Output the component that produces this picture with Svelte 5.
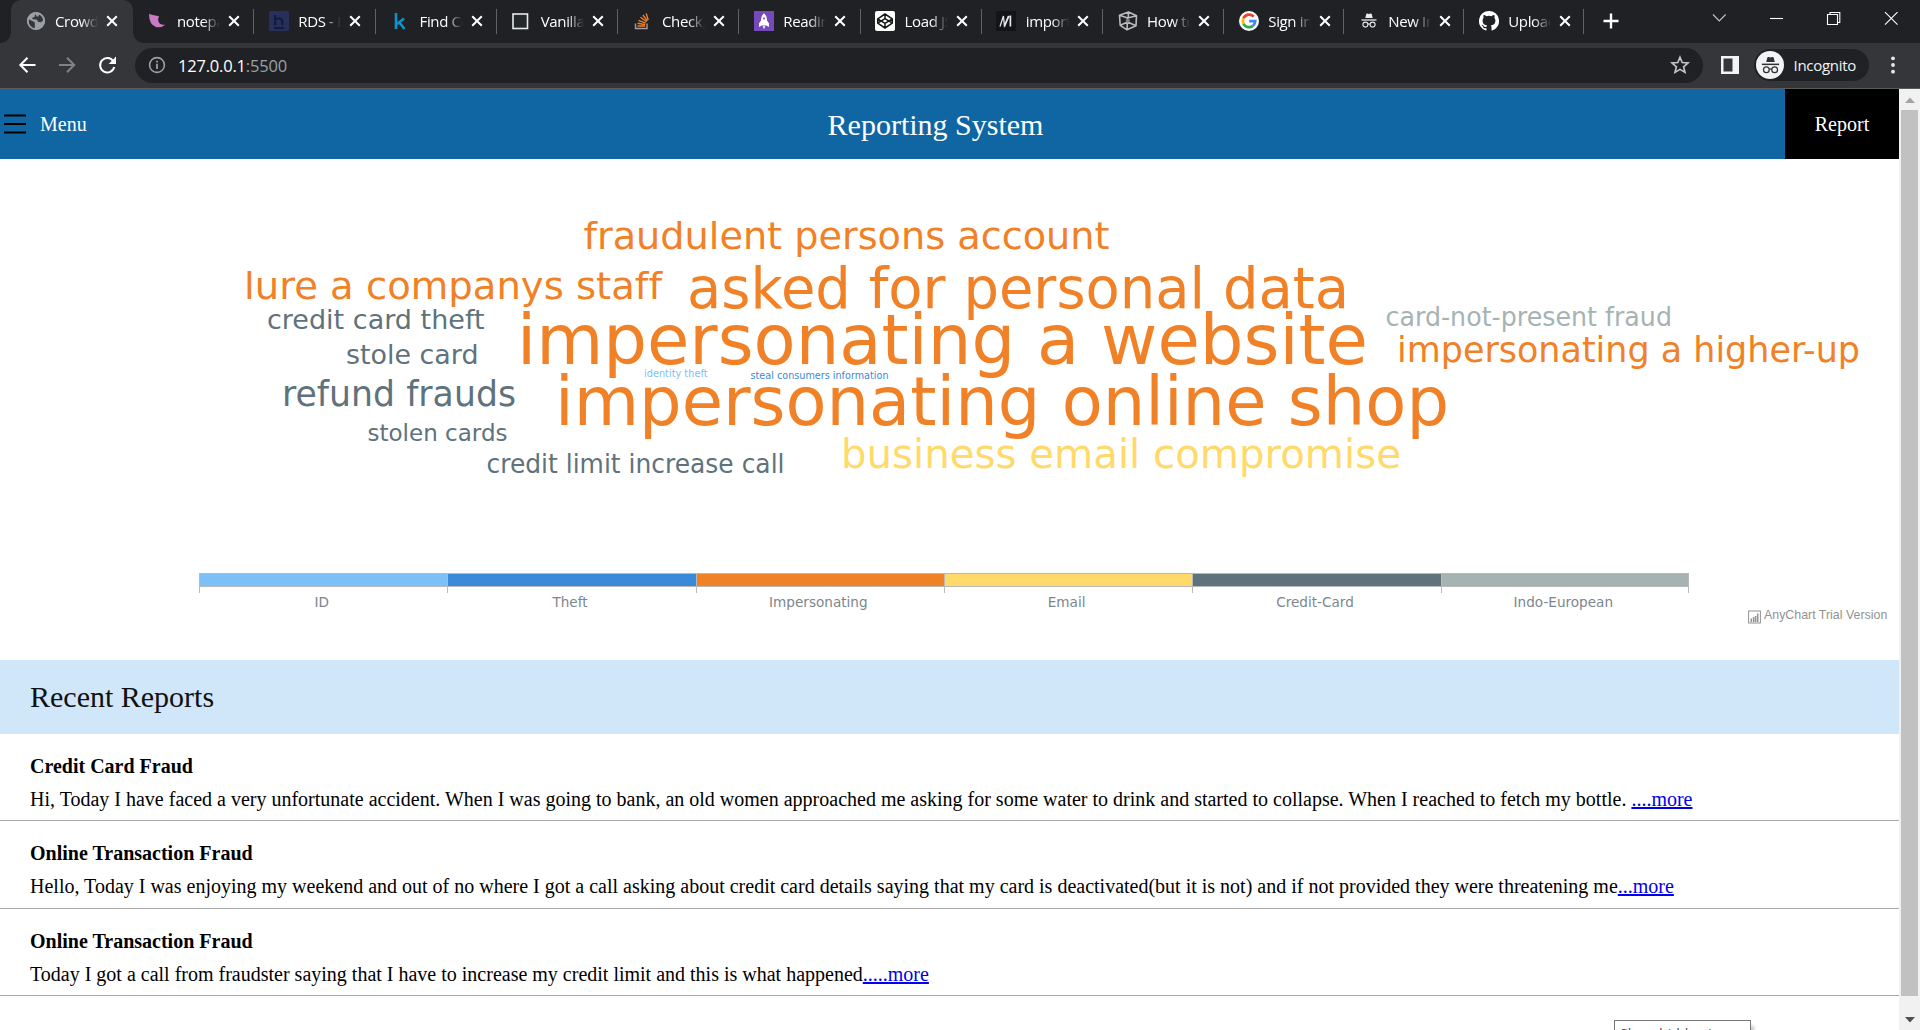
<script>
  const tabs = [
    { icon: 'globe', title: 'Crowd So', active: true },
    { icon: 'petal', title: 'notepad' },
    { icon: 'hashnode', title: 'RDS - D' },
    { icon: 'k', title: 'Find Co' },
    { icon: 'square', title: 'Vanilla J' },
    { icon: 'stack', title: 'Check, if' },
    { icon: 'rocket', title: 'Reading' },
    { icon: 'codepen', title: 'Load JS' },
    { icon: 'm', title: 'import c' },
    { icon: 'cube', title: 'How to' },
    { icon: 'google', title: 'Sign in' },
    { icon: 'spy', title: 'New Inc' },
    { icon: 'github', title: 'Upload' },
  ];

  const words = [
    { t: 'fraudulent persons account', x: 583.5, y: 248.5, w: 526, s: 38, c: '#f18126' },
    { t: 'lure a companys staff', x: 244, y: 298.5, w: 418, s: 38, c: '#f18126' },
    { t: 'asked for personal data', x: 687, y: 308, w: 662, s: 57.5, c: '#f18126' },
    { t: 'impersonating a website', x: 517, y: 364, w: 851, s: 69, c: '#f18126' },
    { t: 'impersonating online shop', x: 555, y: 425, w: 894, s: 67.5, c: '#f18126' },
    { t: 'credit card theft', x: 267, y: 329, w: 217.5, s: 27, c: '#60727b' },
    { t: 'stole card', x: 346, y: 364, w: 132.5, s: 27, c: '#60727b' },
    { t: 'refund frauds', x: 282, y: 406, w: 234, s: 35, c: '#60727b' },
    { t: 'stolen cards', x: 367.5, y: 441, w: 140, s: 23.5, c: '#60727b' },
    { t: 'credit limit increase call', x: 486.5, y: 473, w: 298, s: 26, c: '#60727b' },
    { t: 'business email compromise', x: 841, y: 467.5, w: 560, s: 40, c: '#ffda6a' },
    { t: 'card-not-present fraud', x: 1385.5, y: 326, w: 286.5, s: 26, c: '#a6b3b3' },
    { t: 'impersonating a higher-up', x: 1397, y: 362, w: 463, s: 35, c: '#f18126' },
    { t: 'identity theft', x: 644, y: 377, w: 63.5, s: 10, c: '#7cc0f7' },
    { t: 'steal consumers information', x: 750.5, y: 379, w: 138, s: 10, c: '#3b8ad9' },
  ];

  const categories = [
    { name: 'ID', kind: 'id' },
    { name: 'Theft', kind: 'theft' },
    { name: 'Impersonating', kind: 'imp' },
    { name: 'Email', kind: 'email' },
    { name: 'Credit-Card', kind: 'card' },
    { name: 'Indo-European', kind: 'indo' },
  ];

  const reports = [
    {
      title: 'Credit Card Fraud',
      text: 'Hi, Today I have faced a very unfortunate accident. When I was going to bank, an old women approached me asking for some water to drink and started to collapse. When I reached to fetch my bottle. ',
      more: '....more',
    },
    {
      title: 'Online Transaction Fraud',
      text: 'Hello, Today I was enjoying my weekend and out of no where I got a call asking about credit card details saying that my card is deactivated(but it is not) and if not provided they were threatening me',
      more: '...more',
    },
    {
      title: 'Online Transaction Fraud',
      text: 'Today I got a call from fraudster saying that I have to increase my credit limit and this is what happened',
      more: '.....more',
    },
  ];
</script>

{#snippet spy()}
  <path d="M6.3 7 7.2 3.2Q7.5 2.3 8.4 2.6L10 3.1 11.6 2.6Q12.5 2.3 12.8 3.2L13.7 7Z" fill="currentColor" />
  <path d="M2.5 9H17.5" stroke="currentColor" stroke-width="1.3" />
  <g fill="none" stroke="currentColor" stroke-width="1.1">
    <circle cx="6.4" cy="13.6" r="2.5" /><circle cx="13.6" cy="13.6" r="2.5" />
    <path d="M9 13.2Q10 12.5 11 13.2" />
  </g>
{/snippet}

{#snippet favicon(kind)}
  <svg class="fav" viewBox="0 0 20 20" width="20" height="20">
    {#if kind === 'globe'}
      <circle cx="10" cy="10" r="9" fill="#9aa0a6" />
      <path d="M2.7 8.2 7.2 10.5Q9 10.5 8.8 12.5L8.8 17.2Q4 16.8 2.8 12ZM10 3.2Q8 4.5 8.6 6L6.3 6.7 6.6 8.3 10.5 8.4Q12 9 11.6 10.8L15 11.2 17 9.6Q17 5 13 3.5L12.4 5.5 10.5 5.6Z" fill="#35363a" />
      <circle cx="10" cy="10" r="8.2" fill="none" stroke="#9aa0a6" stroke-width="1.6" />
    {:else if kind === 'petal'}
      <path d="M1 3Q6 4.5 11 5.2Q9 10 12 12.8Q14.5 14.2 17.5 13.4Q13 17.4 8 16Q1 13.5 1 3Z" fill="#c87bc4" />
    {:else if kind === 'hashnode'}
      <rect width="20" height="20" rx="1.5" fill="#27305a" />
      <path d="M6.2 4V14.5M6.2 9Q7.5 7.5 10 7.5 13.3 7.5 13.3 10.5V14.5M5 17H15" fill="none" stroke="#121b3c" stroke-width="2" />
    {:else if kind === 'k'}
      <path d="M6 2V18M14 7.5 7 13M9.5 11.5 14.5 18" fill="none" stroke="#0a93cd" stroke-width="2.6" />
    {:else if kind === 'square'}
      <rect x="2" y="3" width="14.5" height="14.5" fill="#26292b" stroke="#e8eaed" stroke-width="1.6" />
    {:else if kind === 'stack'}
      <path d="M2.5 12.5V17.5H14V12.5" fill="none" stroke="#9aa0a6" stroke-width="1.4" />
      <path d="M4.5 15H12M4.6 12.2 12.2 13.6M5.5 9.3 12.7 12.2M7.5 6.3 13.6 10.8M10 4 14.3 9.8M13.2 2.4 15.2 9" stroke="#f48024" stroke-width="1.4" />
    {:else if kind === 'rocket'}
      <rect width="20" height="20" fill="#764abc" />
      <path d="M10 2.2Q13.4 5 13 9.5L15 12.5V16L12.4 14.6H7.6L5 16V12.5L7 9.5Q6.6 5 10 2.2ZM8.6 15.2H11.4L10 18Z" fill="#fff" />
      <circle cx="10" cy="7.6" r="1" fill="#764abc" />
    {:else if kind === 'codepen'}
      <rect width="20" height="20" rx="2" fill="#fff" />
      <path d="M10 3 17.3 7.8V12.2L10 17 2.7 12.2V7.8ZM10 3V7.8M10 12.2V17M2.7 7.8 10 12.4 17.3 7.8M2.7 12.2 10 7.6 17.3 12.2" fill="none" stroke="#17181a" stroke-width="1.5" stroke-linejoin="round" />
    {:else if kind === 'm'}
      <rect width="20" height="20" fill="#131417" />
      <path d="M4 15.5 7.4 5 8.4 14.5 12.6 5" fill="none" stroke="#e4e4e4" stroke-width="1.3" />
      <path d="M8.4 15.5 12.8 5M14.4 4.5V15.5" fill="none" stroke="#e4e4e4" stroke-width="1.7" />
    {:else if kind === 'cube'}
      <path d="M1.5 4.3 10.5 1 18.5 4.8 18 14.8 9 18.8 2.2 14.3ZM1.5 4.3 9.6 7 18.5 4.8M9.6 7 9 18.8M2.2 14.3 9.6 11 18 14.8M10.5 1 10.2 7" fill="none" stroke="#b9bbbd" stroke-width="1.6" stroke-linejoin="round" />
      <circle cx="9.8" cy="9.8" r="2" fill="#808285" />
    {:else if kind === 'google'}
      <circle cx="10" cy="10" r="10" fill="#fff" />
      <g fill="none" stroke-width="2.8">
        <path d="M14.7 5.6A6.2 6.2 0 0 0 4.5 7.2" stroke="#ea4335" />
        <path d="M4.5 7.2A6.2 6.2 0 0 0 4.5 12.8" stroke="#fbbc05" />
        <path d="M4.5 12.8A6.2 6.2 0 0 0 13.9 14.8" stroke="#34a853" />
        <path d="M13.9 14.8A6.2 6.2 0 0 0 16.2 10.2H10.2" stroke="#4285f4" />
      </g>
    {:else if kind === 'spy'}
      <g class="pale">{@render spy()}</g>
    {:else}
      <path d="M10 0A10 10 0 0 0 6.8 19.5C7.3 19.6 7.5 19.3 7.5 19V17.2C4.7 17.8 4.1 15.9 4.1 15.9 3.7 14.8 3 14.4 3 14.4 2.1 13.8 3.1 13.8 3.1 13.8 4.1 13.9 4.6 14.9 4.6 14.9 5.5 16.4 7 16 7.5 15.7 7.6 15.1 7.9 14.7 8.2 14.4 6 14.1 3.6 13.3 3.6 9.5 3.6 8.4 4 7.5 4.6 6.8 4.5 6.6 4.2 5.5 4.7 4.1 4.7 4.1 5.6 3.9 7.5 5.2A9.6 9.6 0 0 1 12.5 5.2C14.4 3.9 15.3 4.1 15.3 4.1 15.8 5.5 15.5 6.6 15.4 6.8 16 7.5 16.4 8.4 16.4 9.5 16.4 13.3 14 14.1 11.8 14.4 12.2 14.7 12.5 15.3 12.5 16.2V19C12.5 19.3 12.7 19.6 13.2 19.5A10 10 0 0 0 10 0Z" fill="#fff" />
    {/if}
  </svg>
{/snippet}

<div class="window">
  <div class="tabstrip">
    {#each tabs as tab}
      <div class="tab" class:active={tab.active}>
        {@render favicon(tab.icon)}
        <span class="tab-title">{tab.title}</span>
        <svg class="close" viewBox="0 0 12 12" width="12" height="12"><path d="M1.2 1.2 10.8 10.8M10.8 1.2 1.2 10.8" stroke="#fff" stroke-width="2" /></svg>
      </div>
    {/each}
    <svg class="plus" viewBox="0 0 16 16" width="16" height="16"><path d="M8 .5V15.5M.5 8H15.5" stroke="#fff" stroke-width="2.4" /></svg>
    <svg class="controls" viewBox="0 0 190 20" width="190" height="20" fill="none" stroke="#fff" stroke-width="1.1">
      <path d="M3 6.5 9.3 13 15.6 6.5" stroke="#c4c6c9" />
      <path d="M60 10.5H73" />
      <path d="M117.5 6.5H127.5V16.5H117.5ZM120 6.5V4.5H129.8V14.5H127.5" />
      <path d="M175 4.2 187.5 16.7M187.5 4.2 175 16.7" />
    </svg>
  </div>

  <div class="toolbar">
    <svg class="nav" viewBox="0 0 120 24" width="120" height="24" fill="none" stroke="#fff" stroke-width="2">
      <path d="M17.5 12H2.5M9.5 4.8 2.3 12 9.5 19.2" />
      <path d="M41 12H56M49 4.8 56.2 12 49 19.2" stroke="#808285" />
      <path d="M95.3 8.2A7.2 7.2 0 1 0 96.3 14" />
      <path d="M98 3.6V10.9H90.7Z" fill="#fff" stroke="none" />
    </svg>
    <div class="address">
      <svg viewBox="0 0 18 18" width="18" height="18" fill="none" stroke="#9aa0a6" stroke-width="1.6"><circle cx="9" cy="9" r="7.4" /><path d="M9 7.8V13M9 4.8V6.5" stroke-width="1.8" /></svg>
      <span class="url">127.0.0.1<span class="port">:5500</span></span>
      <svg class="star" viewBox="0 0 20 20" width="20" height="20"><path d="M10 2.2 12.2 7.6 18 8 13.6 11.8 15 17.4 10 14.4 5 17.4 6.4 11.8 2 8 7.8 7.6Z" fill="none" stroke="#c6c8ca" stroke-width="1.6" /></svg>
    </div>
    <svg class="panel" viewBox="0 0 18 18" width="18" height="18"><path d="M0 0H18V18H0ZM2.5 2.5V15.5H11.5V2.5Z" fill="#f1f3f4" fill-rule="evenodd" /></svg>
    <div class="incognito">
      <span class="avatar"><svg viewBox="0 0 20 20" width="23" height="23">{@render spy()}</svg></span>
      <span>Incognito</span>
    </div>
    <svg class="dots" viewBox="0 0 4 18" width="4" height="18" fill="#e8eaed"><circle cx="2" cy="2.3" r="1.9" /><circle cx="2" cy="9" r="1.9" /><circle cx="2" cy="15.7" r="1.9" /></svg>
  </div>

  <div class="viewport">
    <main>
      <header>
        <div class="menu">
          <svg viewBox="0 0 22 20" width="22" height="20"><path d="M0 1.5H22M0 10H22M0 18.5H22" stroke="#000" stroke-width="2" /></svg>
          <span>Menu</span>
        </div>
        <h1>Reporting System</h1>
        <div class="report-btn">Report</div>
      </header>

      <section class="chart">
        <svg class="cloud" viewBox="0 159 1899 414" width="1899" height="414">
          {#each words as w}
            <text x={w.x} y={w.y} font-size={w.s} fill={w.c} textLength={w.w} lengthAdjust="spacingAndGlyphs">{w.t}</text>
          {/each}
        </svg>
        <div class="scale">
          {#each categories as c}
            <div class="range">
              <div class="swatch {c.kind}"></div>
              <span>{c.name}</span>
            </div>
          {/each}
        </div>
        <div class="credit">
          <svg viewBox="0 0 13 14" width="13" height="14"><rect x=".6" y="1" width="11.8" height="12" fill="none" stroke="#929292" /><path d="M3.3 8.5V12M5.6 7V12M7.6 6V12M9.7 3.5V12" stroke="#929292" stroke-width="1.5" /></svg>
          <span>AnyChart Trial Version</span>
        </div>
      </section>

      <h2>Recent Reports</h2>
      {#each reports as r}
        <article>
          <h3>{r.title}</h3>
          <p>{r.text}<a href="#more">{r.more}</a></p>
        </article>
      {/each}
    </main>
    <div class="scrollbar">
      <svg viewBox="0 0 10 6" width="10" height="6"><path d="M0 6 5 .5 10 6Z" fill="#a3a3a3" /></svg>
      <div class="thumb"></div>
      <svg viewBox="0 0 10 6" width="10" height="6"><path d="M0 0 5 5.5 10 0Z" fill="#505050" /></svg>
    </div>
  </div>
  <div class="tooltip">Show hidden icons</div>
</div>

<style>
  :global(body) { margin: 0; background: #fff; overflow: hidden; }
  svg { display: block; flex: none; }
  .window {
    position: relative;
    width: 1920px;
    height: 1030px;
    overflow: hidden;
    display: flex;
    flex-direction: column;
    font-family: 'Liberation Serif', serif;
  }

  .tabstrip {
    height: 43px;
    flex: none;
    display: flex;
    background: #202124;
    padding-left: 11px;
    box-sizing: border-box;
    font: 15px 'Open Sans', 'Noto Sans', sans-serif;
    color: #fff;
  }
  .tab {
    position: relative;
    width: 121.25px;
    flex: none;
    display: flex;
    align-items: center;
    box-sizing: border-box;
    padding: 0 0 1px 14.5px;
  }
  .tab:nth-child(n + 11) { width: 120px; }
  .tab:not(.active)::after {
    content: '';
    position: absolute;
    right: 0;
    top: 9px;
    width: 1px;
    height: 25px;
    background: #5f6368;
  }
  .tab.active { width: 122px; background: #35363a; border-radius: 10px 10px 0 0; }
  .tab.active::after {
    content: '';
    position: absolute;
    left: 100%;
    bottom: 0;
    width: 10px;
    height: 10px;
    background: radial-gradient(circle at 10px 0, transparent 9.5px, #35363a 10px);
  }
  .tab.active::before {
    content: '';
    position: absolute;
    right: 100%;
    bottom: 0;
    width: 10px;
    height: 10px;
    background: radial-gradient(circle at 0 0, transparent 9.5px, #35363a 10px);
  }
  .tab-title {
    width: 43px;
    margin-left: 9.5px;
    overflow: hidden;
    white-space: nowrap;
    letter-spacing: -0.35px;
    line-height: 24px;
    mask-image: linear-gradient(90deg, #000 60%, transparent 100%);
  }
  .close { margin-left: 8px; }
  .plus { margin: 13px 0 0 19px; }
  .controls { margin: 8px 0 0 91px; }
  .pale { color: #e8eaed; }

  .toolbar {
    height: 46px;
    flex: none;
    box-sizing: border-box;
    border-bottom: 1px solid #5a5b5e;
    background: #35363a;
    display: flex;
    align-items: center;
    padding-bottom: 1px;
  }
  .nav { margin-left: 18px; }
  .address {
    width: 1568px;
    height: 35px;
    margin-left: -3px;
    box-sizing: border-box;
    padding: 0 13px;
    border-radius: 18px;
    background: #202124;
    display: flex;
    align-items: center;
    font: 16.5px 'Open Sans', 'Noto Sans', sans-serif;
    color: #fff;
    letter-spacing: -0.2px;
  }
  .url { margin-left: 12px; }
  .port { color: #9aa0a6; }
  .star { margin-left: auto; }
  .panel { margin-left: 18px; }
  .incognito {
    margin-left: 15px;
    width: 115px;
    height: 32px;
    box-sizing: border-box;
    padding-left: 2px;
    border-radius: 16px;
    background: #202124;
    display: flex;
    align-items: center;
    gap: 9.5px;
    font: 15px 'Open Sans', 'Noto Sans', sans-serif;
    letter-spacing: -0.3px;
    color: #f1f3f4;
  }
  .avatar {
    width: 28px;
    height: 28px;
    flex: none;
    border-radius: 50%;
    background: #f1f3f4;
    color: #303134;
    display: grid;
    place-items: center;
  }
  .dots { margin-left: 21.5px; }

  .viewport { flex: 1; display: flex; min-height: 0; }
  main { width: 1899px; flex: none; overflow: hidden; }
  header {
    height: 70px;
    background: #1066a3;
    color: #fff;
    display: grid;
    grid-template-columns: 114px 1fr 114px;
    align-items: center;
    font-size: 20px;
  }
  .menu { display: flex; align-items: center; gap: 14px; padding-left: 4px; }
  .menu span { padding-top: 1px; }
  h1 { margin: 0; text-align: center; font-size: 30px; font-weight: 400; line-height: 34px; padding: 1px 28px 0 0; }
  .report-btn { height: 100%; box-sizing: border-box; padding-top: 1px; background: #000; display: grid; place-items: center; }

  .chart { position: relative; height: 501px; }
  .cloud { font-family: Verdana, 'DejaVu Sans', sans-serif; font-variant-ligatures: none; }
  .scale { display: flex; width: 1490px; margin-left: 199px; }
  .range {
    flex: 1;
    text-align: center;
    font: 13.6px/18px Verdana, 'DejaVu Sans', sans-serif;
    letter-spacing: 0;
    color: #7c868e;
    position: relative;
  }
  .range::before,
  .range:last-child::after {
    content: '';
    position: absolute;
    left: 0;
    top: 14px;
    width: 1px;
    height: 6px;
    background: #b9bdc0;
  }
  .range:last-child::after { left: auto; right: 0; }
  .range span { display: block; padding: 6px 3px 0 0; }
  .swatch { height: 14px; box-sizing: border-box; border: 1px solid #b9b9b9; border-right: 0; }
  .range:last-child .swatch { border-right: 1px solid #b9b9b9; }
  .id { background: #7cc0f7; }
  .theft { background: #3b8ad9; }
  .imp { background: #f18126; }
  .email { background: #ffda6a; }
  .card { background: #60727b; }
  .indo { background: #a6b3b3; }
  .credit {
    position: absolute;
    left: 1748px;
    top: 451px;
    height: 14px;
    overflow: hidden;
    display: flex;
    gap: 3px;
    white-space: nowrap;
    font: 12.4px/10px 'Liberation Sans', sans-serif;
    color: #929292;
  }

  h2 {
    margin: 0;
    height: 74px;
    padding-left: 30px;
    background: #d0e7fa;
    font-size: 30px;
    font-weight: 400;
    line-height: 74px;
    color: #111;
  }
  article {
    height: 87px;
    box-sizing: border-box;
    border-bottom: 1px solid #a9a9a9;
    padding: 21px 30px 0;
    font-size: 20px;
    white-space: nowrap;
  }
  article:nth-of-type(2) { height: 88px; }
  h3, p { margin: 0; font-size: 20px; line-height: 23px; }
  p { margin-top: 10px; }
  a { color: #0000ee; text-decoration-thickness: 2px; }

  .scrollbar {
    width: 21px;
    background: #f1f1f1;
    display: flex;
    flex-direction: column;
    align-items: center;
    padding-top: 8px;
    box-sizing: border-box;
  }
  .thumb { width: 17px; height: 886px; margin: 7px 0 21px; background: #c1c1c1; flex: none; }
  .tooltip {
    position: absolute;
    left: 1614px;
    top: 1020px;
    width: 137px;
    height: 26px;
    box-sizing: border-box;
    border: 1px solid #767676;
    background: #fff;
    box-shadow: 3px 6px 3px #9998;
    padding: 2px 0 0 5px;
    font: 14.5px/22px 'Open Sans', 'Noto Sans', sans-serif;
    letter-spacing: -0.3px;
    color: #575757;
    white-space: nowrap;
  }
</style>
